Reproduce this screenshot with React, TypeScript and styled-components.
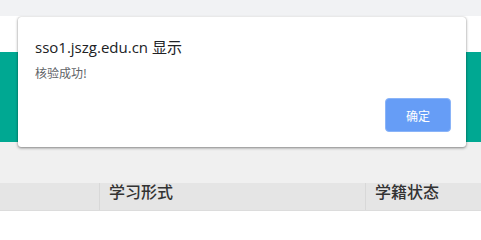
import React from "react";
import styled, { createGlobalStyle } from "styled-components";

const Global = createGlobalStyle`
    html, body {
        margin: 0;
        padding: 0;
        background: #ffffff;
    }
    body {
        font-family: "Segoe UI", "Open Sans", "Noto Sans CJK SC", sans-serif;
    }
`

export default function App() {
    return (
        <Page>
            <Global />
            <TopBar />
            <WhiteBand />
            <Banner />
            <GrayBand />
            <HeaderRow>
                <HeadCell width={100} />
                <HeadCell width={266}>学习形式</HeadCell>
                <HeadCell width={115} last>学籍状态</HeadCell>
            </HeaderRow>
            <Dialog>
                <Title>sso1.jszg.edu.cn 显示</Title>
                <Message>核验成功!</Message>
                <Actions>
                    <OkButton>确定</OkButton>
                </Actions>
            </Dialog>
        </Page>
    )
}

const Page = styled.div`
    position: relative;
    width: 481px;
    height: 219px;
    overflow: hidden;
    background: #ffffff;
`

const TopBar = styled.div`
    height: 16px;
    background: #f1f2f4;
`

const WhiteBand = styled.div`
    height: 36px;
    background: #ffffff;
`

const Banner = styled.div`
    height: 90px;
    background: #00a892;
`

const GrayBand = styled.div`
    height: 41px;
    background: #f0f0f0;
`

const HeaderRow = styled.div`
    display: flex;
    height: 27px;
    background: #e5e5e5;
    border-bottom: 1px solid #dcdcdc;
`

const HeadCell = styled.div<{ width: number; last?: boolean }>`
    width: ${(p) => p.width}px;
    box-sizing: border-box;
    border-right: ${(p) => (p.last ? "none" : "1px solid #d8d8d8")};
    padding-left: 9px;
    font-family: "Noto Sans CJK SC", sans-serif;
    font-weight: 500;
    font-size: 16px;
    color: #333333;
    line-height: 16px;
`

const Dialog = styled.div`
    position: absolute;
    left: 18px;
    top: 17px;
    width: 448px;
    height: 130px;
    box-sizing: border-box;
    background: #ffffff;
    border-radius: 3px;
    box-shadow: 0 1px 3px rgba(0, 0, 0, 0.45), 0 0 1px rgba(0, 0, 0, 0.25);
    padding: 21px 15px 0 17px;
    display: flex;
    flex-direction: column;
`

const Title = styled.div`
    font-family: "Segoe UI", "Open Sans", "Noto Sans CJK SC", sans-serif;
    font-size: 15px;
    line-height: 18px;
    color: #202124;
`

const Message = styled.div`
    margin-top: 10px;
    font-family: "Noto Sans CJK SC", sans-serif;
    font-size: 12px;
    line-height: 14px;
    color: #5f6368;
`

const Actions = styled.div`
    display: flex;
    justify-content: flex-end;
    margin-top: 18px;
`

const OkButton = styled.button`
    width: 66px;
    height: 34px;
    border: 1px solid #8ab4f8;
    border-radius: 4px;
    background: #669df6;
    color: #ffffff;
    font-family: "Noto Sans CJK SC", sans-serif;
    font-size: 12px;
    padding: 0;
`
